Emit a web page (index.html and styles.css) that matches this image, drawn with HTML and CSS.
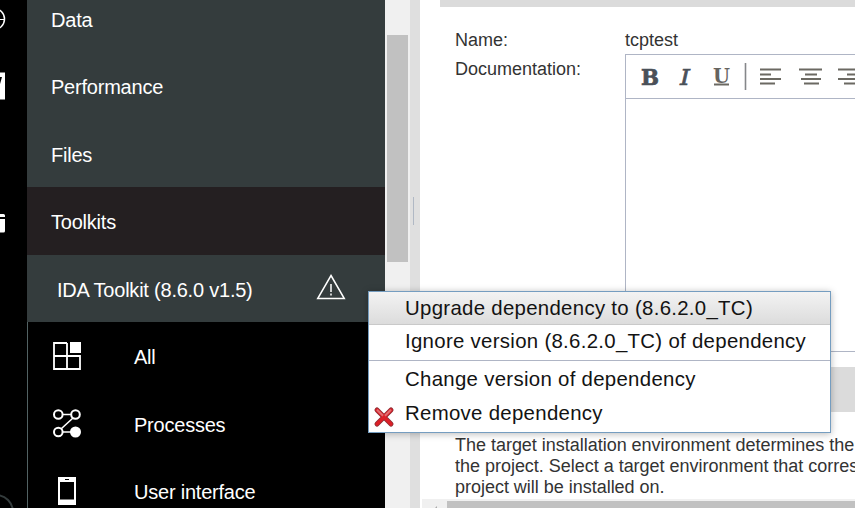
FILE: index.html
```html
<!DOCTYPE html>
<html lang="en">
<head>
<meta charset="utf-8">
<title>Process app settings</title>
<link rel="stylesheet" href="styles.css">
</head>
<body>
<div class="app">
  <nav class="rail">
    <svg width="27" height="508" fill="none" stroke="#fff">
      <circle cx="-6" cy="19" r="10.500" stroke-width="1.500"/><path d="M-6 19.500H4.500" stroke-width="1"/>
      <path d="M-8 72.500H5V99.500H-8Z" fill="#fff" stroke="none"/><path d="M0 77H2L0 84Z" fill="#000" stroke="none"/>
      <path d="M0 214H3.500Q5 214 5 215.500V217H0ZM0 219H5V231Q5 232.500 3.500 232.500H0Z" fill="#fff" stroke="none"/>
      <circle cx="-4" cy="512" r="17" stroke="#343c3d" stroke-width="2"/>
    </svg>
  </nav>
  <aside class="sidebar">
    <div class="row"><span>Data</span></div>
    <div class="row"><span>Performance</span></div>
    <div class="row"><span>Files</span></div>
    <div class="row selected"><span>Toolkits</span></div>
    <div class="row toolkit"><span>IDA Toolkit (8.6.0 v1.5)</span>
      <svg class="warning" width="32" height="28" fill="none" stroke="#fff"><path d="M16 1.500L29.300 24.500H2.700Z" stroke-width="1.500"/><path d="M16 10V18M16 19.500V21.500" stroke-width="1.500"/></svg>
    </div>
    <div class="children">
      <div class="row"><svg width="30" height="30" fill="none" stroke="#fff"><path d="M15 2H2V28H28V15H2M15 2V28" stroke-width="1.800"/><path d="M18 1H29V12H18Z" fill="#fff" stroke="none"/></svg><span>All</span></div>
      <div class="row"><svg width="30" height="30" fill="none" stroke="#fff" stroke-width="2"><path d="M10.500 6.500H19.500M21 10L9.500 20.500M10.500 24H20" stroke-width="1.600"/><circle cx="6.300" cy="6.500" r="4.300"/><circle cx="23.500" cy="6.500" r="4.300"/><circle cx="6.300" cy="24" r="4.300"/><circle cx="23.500" cy="24" r="4.500" fill="#fff"/></svg><span>Processes</span></div>
      <div class="row"><svg width="30" height="30"><path d="M6 1H24V29H6Z" fill="#fff"/><path d="M8 6H22V23.500H8Z" fill="#000"/><path d="M13 3.500H17" stroke="#000"/></svg><span>User interface</span></div>
    </div>
  </aside>
  <div class="scrollbar"><div class="thumb"></div></div>
  <div class="splitter"><div class="grip"></div></div>
  <main class="content">
    <div class="section-bar top"></div>
    <div class="field"><span class="label">Name:</span><span>tcptest</span></div>
    <div class="field"><span class="label">Documentation:</span>
      <div class="editor">
        <div class="toolbar">
          <svg width="229" height="43" stroke="#6b6962" stroke-width="2" fill="none">
            <g fill="#4a5058" font-family="DejaVu Serif, serif" font-size="22">
              <text class="bold" x="15" y="29.500" stroke="#4a5058" stroke-width=".7" textLength="18" lengthAdjust="spacingAndGlyphs">B</text>
              <text class="italic" x="54" y="29.500" stroke="#4a5058" stroke-width=".6" textLength="10" lengthAdjust="spacingAndGlyphs">I</text>
              <text class="bold" x="87" y="27.500" font-size="20" fill="#66645f" stroke="none" textLength="17" lengthAdjust="spacingAndGlyphs">U</text>
            </g>
            <path d="M88 29.500H103"/>
            <path d="M119.500 8V35" stroke="#85878a" stroke-width="1.600"/>
            <path d="M134 14.500H155M134 19.500H145M134 24H155M134 28.500H149M173 14.500H196M179 19.500H191M175 24H195M178 28.500H193M212 14.500H235M221 19.500H235M212 24H235M218 28.500H235"/>
          </svg>
        </div>
        <div class="editing-area"></div>
      </div>
    </div>
    <div class="section-bar lower"></div>
    <p class="help">The target installation environment determines the<br>the project. Select a target environment that corres<br>project will be installed on.</p>
    <div class="hscroll"><svg width="25" height="10"><path d="M15 7V20L8.500 13.500Z" fill="#aaa"/></svg><div class="hthumb"></div></div>
  </main>
  <div class="menu">
    <div class="item active">Upgrade dependency to (8.6.2.0_TC)</div>
    <div class="item second">Ignore version (8.6.2.0_TC) of dependency</div>
    <div class="item third">Change version of dependency</div>
    <div class="item last"><svg class="remove" width="22" height="22"><path d="M4 4L18 18M18 4L4 18" stroke="#8c3036" stroke-width="5" stroke-linecap="round"/><path d="M4 4L18 18M18 4L4 18" stroke="#dc1f27" stroke-width="3.300" stroke-linecap="round"/><path d="M4 3.800L10 9.800M18 3.800L12 9.800" stroke="#e26c70" stroke-width="2"/></svg>Remove dependency</div>
  </div>
</div>
</body>
</html>
```
FILE: styles.css
```css
* { box-sizing: border-box; }
body { margin: 0; font-family: "Liberation Sans", Arial, sans-serif; background: #fff; overflow: hidden; }
svg { display: block; flex: none; }
.app { display: flex; width: 855px; height: 508px; overflow: hidden; position: relative; }
.rail { flex: none; width: 27px; background: #000; }
.sidebar { flex: none; width: 358px; background: #343c3d; color: #fff; font-size: 20px; letter-spacing: -0.22px; margin-top: -15.500px; height: 524px; overflow: hidden; }
.row { height: 67.500px; display: flex; align-items: center; padding-left: 24px; white-space: nowrap; }
.row span { padding-top: 4px; }
.selected { background: #241f21; }
.toolkit { padding: 0 38px 0 30px; justify-content: space-between; }
.children { background: #000; border-left: 1px solid #526263; }
.children .row { gap: 52px; }
.scrollbar { flex: none; width: 25px; background: #f0f0f0; padding: 35px 2px 0; }
.thumb { height: 227px; background: #c1c1c1; width: 21px; }
.splitter { flex: none; width: 10px; background: #dfdfdf; padding: 197px 0 0 3px; }
.grip { width: 1px; height: 28px; background: #b0b8c4; }
.content { flex: 1; min-width: 0; overflow: hidden; color: #333; font-size: 18px; display: flex; flex-direction: column; }
.section-bar { flex: none; background: #dbdbdb; margin-left: 20px; }
.top { height: 7px; margin-bottom: 22px; }
.field { flex: none; display: flex; padding-left: 35px; line-height: 22px; height: 29px; }
.field + .field { height: 294px; }
.label { width: 170px; flex: none; }
.editor { flex: none; width: 260px; height: 298px; border: 1px solid #afb5c5; margin-top: -4px; }
.toolbar { height: 44px; border-bottom: 1px solid #afb5c5; }
.bold { font-weight: bold; }
.italic { font-style: italic; }
.lower { height: 45px; margin-top: 15px; }
.help { margin: 23px 0 0 35px; line-height: 21px; white-space: nowrap; letter-spacing: -0.02px; }
.hscroll { flex: none; display: flex; height: 20px; margin: 1px 0 0 2px; background: #f0f0f0; }
.hthumb { flex: 1; margin-top: 2px; background: #c1c1c1; }
.menu { position: absolute; left: 368px; top: 291px; width: 463px; height: 142px; border: 1px solid #759dc0; background: #fff; box-shadow: 0 1px 7px rgba(0,0,0,.28); color: #131313; font-size: 20.400px; letter-spacing: .3px; }
.item { height: 33px; line-height: 32px; padding-left: 36px; white-space: nowrap; position: relative; }
.active { background: linear-gradient(#f3f3f3, #dcdcdc); border-bottom: 1px solid #c9c9c9; }
.second { height: 36px; border-bottom: 1px solid #afb5c5; }
.third { height: 35px; line-height: 36px; }
.last { line-height: 34px; }
.remove { position: absolute; left: 4px; top: 10px; }
```
